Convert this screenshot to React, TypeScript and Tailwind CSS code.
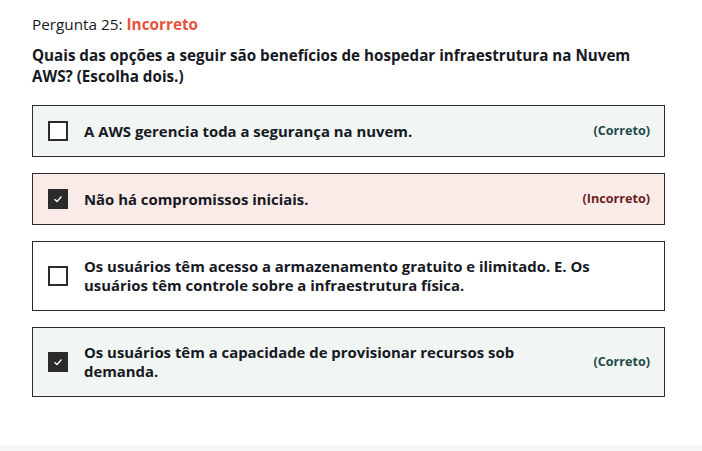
import React from "react";

interface OptionProps {
  label: string;
  checked: boolean;
  status: "Correto" | "Incorreto";
  highlight: "correct" | "incorrect" | "none";
}

const Option = ({ label, checked, status, highlight }: OptionProps) => {
  const bg =
    highlight === "correct"
      ? "bg-[#f1f5f4]"
      : highlight === "incorrect"
        ? "bg-[#fbebe8]"
        : "bg-white";
  return (
    <div
      className={`flex items-center border border-[#2b2b2b] pl-[15px] pr-[14px] py-[15px] min-h-[52px] ${bg}`}
    >
      <div
        className={`w-5 h-5 shrink-0 flex items-center justify-center ${
          checked ? "bg-[#2b2b2b]" : "border-2 border-[#2b2b2b] bg-white"
        }`}
      >
        {checked && (
          <svg width="12" height="12" viewBox="0 0 12 12" fill="none">
            <path d="M2.5 6.2 L5 8.5 L9.5 3.5" stroke="white" strokeWidth="1.3" />
          </svg>
        )}
      </div>
      <div className="flex-1 pl-4 pr-10 text-[14.9px] leading-[19px] font-bold text-[#16191f]">
        {label}
      </div>
      {highlight !== "none" && (
        <div
          className={`text-[12.6px] font-bold shrink-0 ${
            status === "Correto" ? "text-[#1d4a4a]" : "text-[#6a1e1e]"
          }`}
        >
          ({status})
        </div>
      )}
    </div>
  );
};

export default function App() {
  return (
    <div
      className="w-[702px] h-[451px] bg-white flex flex-col"
      style={{ fontFamily: "'Open Sans', 'Noto Sans', sans-serif" }}
    >
      <div className="flex-1 pl-8 pr-[37px] pt-[13px]">
        <div className="text-[15.3px] leading-[22px] text-[#16191f]">
          Pergunta 25: <span className="font-bold text-[#e8533b]">Incorreto</span>
        </div>
        <div className="mt-[10px] text-[15.2px] leading-[21px] font-bold text-[#16191f] pr-6">
          Quais das opções a seguir são benefícios de hospedar infraestrutura na Nuvem AWS?
          (Escolha dois.)
        </div>
        <div className="mt-[18px] flex flex-col gap-4">
          <Option
            label="A AWS gerencia toda a segurança na nuvem."
            checked={false}
            status="Correto"
            highlight="correct"
          />
          <Option
            label="Não há compromissos iniciais."
            checked={true}
            status="Incorreto"
            highlight="incorrect"
          />
          <Option
            label="Os usuários têm acesso a armazenamento gratuito e ilimitado. E. Os usuários têm controle sobre a infraestrutura física."
            checked={false}
            status="Correto"
            highlight="none"
          />
          <Option
            label="Os usuários têm a capacidade de provisionar recursos sob demanda."
            checked={true}
            status="Correto"
            highlight="correct"
          />
        </div>
      </div>
      <div className="h-[6px] bg-[#f6f7f8]" />
    </div>
  );
}
